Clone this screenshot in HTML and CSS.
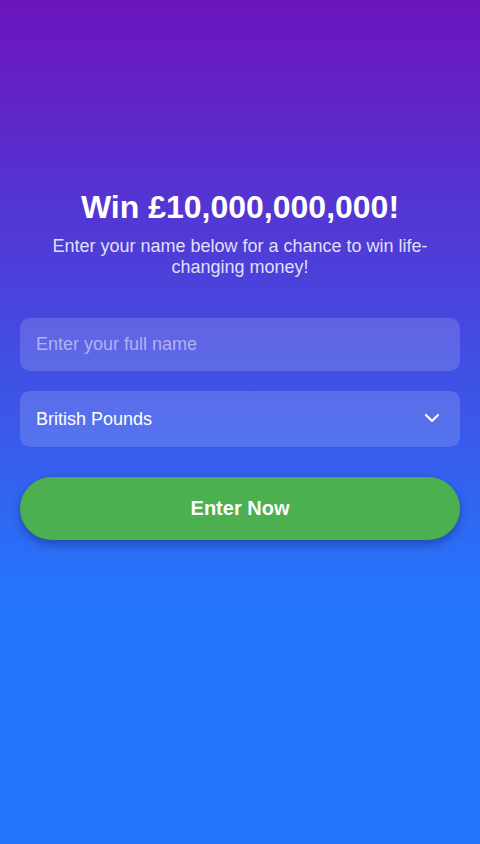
FILE: index.html
```html
<!DOCTYPE html>
<html lang="en">
<head>
    <meta charset="UTF-8">
    <meta name="viewport" content="width=device-width, initial-scale=1.0">
    <title>Win £10,000,000,000!</title>
    <link rel="stylesheet" href="styles.css">
</head>
<body>

<div class="container">
    <h1>Win £10,000,000,000!</h1>
    <p class="subtitle">Enter your name below for a chance to win life-changing money!</p>
    <form id="entryForm" class="entry-form">
        <input type="text" id="fullName" name="fullName" placeholder="Enter your full name" required>
        <div class="select-wrap">
            <select id="currency" name="currency">
                <option value="GBP">British Pounds</option>
                <option value="USD">US Dollars</option>
                <option value="EUR">Euros</option>
            </select>
            <svg class="chevron" width="16" height="10" viewBox="0 0 16 10" aria-hidden="true">
                <path d="M2 2l6 6 6-6" fill="none" stroke="#ffffff" stroke-width="2.2" stroke-linecap="round" stroke-linejoin="round"/>
            </svg>
        </div>
        <button type="submit">Enter Now</button>
    </form>
</div>

</body>
</html>
```

FILE: styles.css
```css
html {
    min-height: 100%;
    background: #2575fc linear-gradient(to bottom, #6c14bd 0, #2575fc 600px) no-repeat;
}
body {
    font-family: "Liberation Sans", Arial, sans-serif;
    color: #fff;
    margin: 0;
    padding: 189px 20px 20px;
}
.container {
    max-width: 440px;
    margin: 0 auto;
    text-align: center;
}
h1 {
    font-size: 32px;
    line-height: 37px;
    margin: 0 0 10px;
}
.subtitle {
    font-size: 18px;
    line-height: 21px;
    color: rgba(255, 255, 255, 0.85);
    margin: 0 0 40px;
}
.entry-form {
    display: flex;
    flex-direction: column;
}
input, select {
    width: 100%;
    box-sizing: border-box;
    font-family: inherit;
    font-size: 18px;
    color: #fff;
    background: rgba(255, 255, 255, 0.15);
    border: none;
    border-radius: 10px;
    padding: 0 16px;
    outline: none;
}
input {
    height: 53px;
}
input::placeholder {
    color: rgba(255, 255, 255, 0.5);
}
.select-wrap {
    position: relative;
    margin-top: 20px;
}
select {
    height: 56px;
    appearance: none;
    -webkit-appearance: none;
    cursor: pointer;
}
select option {
    color: #333;
}
.chevron {
    position: absolute;
    right: 20px;
    top: 22px;
    pointer-events: none;
}
button {
    margin-top: 30px;
    height: 63px;
    border: none;
    border-radius: 32px;
    background-color: #4caf50;
    color: #fff;
    font-family: inherit;
    font-size: 20px;
    font-weight: bold;
    cursor: pointer;
    box-shadow: 0 4px 10px rgba(0, 0, 0, 0.3);
}
button:hover {
    background-color: #45a049;
}
```
